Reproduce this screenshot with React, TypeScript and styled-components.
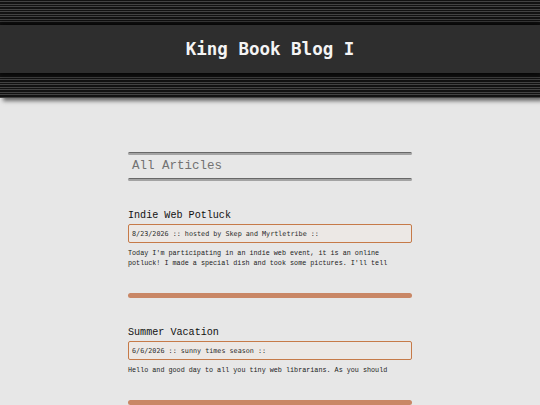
import { FC } from 'react'
import styled, { createGlobalStyle } from 'styled-components'

interface IPost {
  title: string
  meta: string
  excerpt: string
}

const posts: IPost[] = [
  {
    title: 'Indie Web Potluck',
    meta: '8/23/2026 :: hosted by Skep and Myrtletribe ::',
    excerpt:
      "Today I'm participating in an indie web event, it is an online potluck! I made a special dish and took some pictures. I'll tell",
  },
  {
    title: 'Summer Vacation',
    meta: '6/6/2026 :: sunny times season ::',
    excerpt: 'Hello and good day to all you tiny web librarians. As you should',
  },
]

const GlobalStyle = createGlobalStyle`
  html, body {
    margin: 0;
    padding: 0;
    background: #e7e7e7;
  }
  body {
    font-family: "Liberation Mono", "DejaVu Sans Mono", monospace;
    color: #1a1a1a;
    overflow: hidden;
  }
`

const Masthead = styled.header({
  boxShadow: '3px 3px 4px rgba(0, 0, 0, 0.55)',
})

const Stripes = styled.div<{ $height: number }>`
  height: ${(p) => p.$height}px;
  background: repeating-linear-gradient(
    to bottom,
    #121212 0 1.5px,
    #424242 1.5px 2.45px
  );
`

const TitleBar = styled.div({
  position: 'relative',
  zIndex: 1,
  height: 48,
  background: '#2e2e2e',
  boxShadow: '0 0 6px 1px #000',
  display: 'flex',
  alignItems: 'center',
  justifyContent: 'center',
})

const SiteTitle = styled.h1({
  margin: 0,
  fontFamily: '"DejaVu Sans Mono", monospace',
  fontWeight: 'bold',
  fontSize: 17.5,
  color: '#f4f4f4',
})

const Column = styled.main({
  width: 284,
  margin: '54px auto 0',
})

const Rule = styled.div({
  height: 3,
  borderRadius: 2,
  background: 'linear-gradient(#686868 0 1px, #a3a3a3 1px)',
})

const SectionTitle = styled.h2({
  margin: 0,
  paddingLeft: 4,
  fontSize: 12.5,
  lineHeight: '23px',
  fontWeight: 'normal',
  color: '#727272',
})

const Article = styled.article({
  marginTop: 29,
})

const PostTitle = styled.h3({
  margin: '0 0 2px',
  fontSize: 10.1,
  lineHeight: '12px',
  fontWeight: 'normal',
  color: '#111',
})

const Meta = styled.div({
  boxSizing: 'border-box',
  height: 19,
  padding: '0 3px',
  display: 'flex',
  alignItems: 'center',
  border: '1.5px solid #c67a48',
  borderRadius: 2,
  background: '#ece8e5',
  fontFamily: '"DejaVu Sans Mono", monospace',
  fontSize: 6.75,
  color: '#2a2a2a',
  whiteSpace: 'nowrap',
})

const Excerpt = styled.p({
  margin: '5px 0 0',
  fontSize: 6.75,
  lineHeight: '10px',
  color: '#222',
})

const Divider = styled.div({
  height: 5,
  marginTop: 25,
  borderRadius: 3,
  background: '#c98766',
})

const Post: FC<IPost> = ({ title, meta, excerpt }) => (
  <Article>
    <PostTitle>{title}</PostTitle>
    <Meta>{meta}</Meta>
    <Excerpt>{excerpt}</Excerpt>
    <Divider />
  </Article>
)

export default function App() {
  return (
    <>
      <GlobalStyle />
      <Masthead>
        <Stripes $height={25} />
        <TitleBar>
          <SiteTitle>King Book Blog I</SiteTitle>
        </TitleBar>
        <Stripes $height={25} />
      </Masthead>
      <Column>
        <Rule />
        <SectionTitle>All Articles</SectionTitle>
        <Rule />
        {posts.map((post) => (
          <Post key={post.title} {...post} />
        ))}
      </Column>
    </>
  )
}
